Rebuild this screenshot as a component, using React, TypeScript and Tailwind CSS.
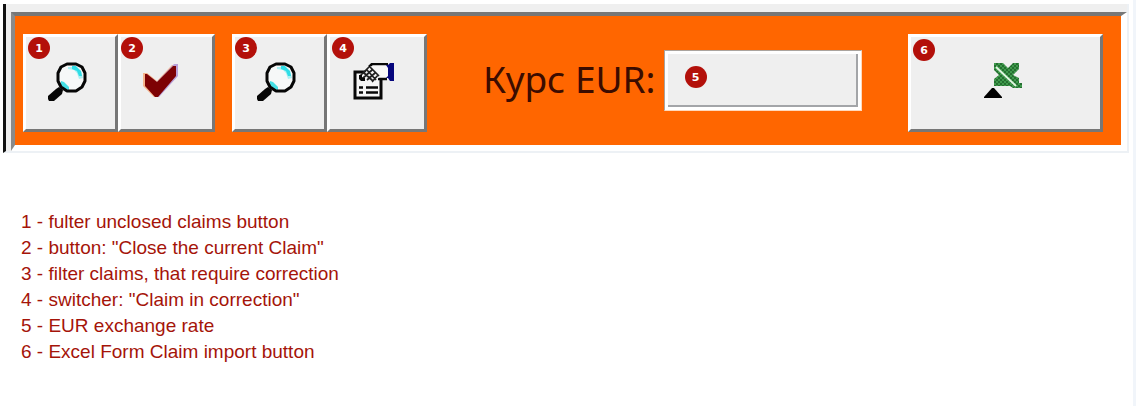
import type { ReactNode } from 'react';

function MagnifierIcon() {
  return (
    <svg viewBox="0 0 39 39" className="size-[39px]" aria-hidden="true">
      <path d="M19 2h10l5 3 3 5v10l-3 5-5 4H19l-5-4-3-5V10l3-5z" fill="#f6f8f8" />
      <path d="M20 5h8l5 4 2 7-4 1-2-6-3-3-6-1z" fill="#a9eff2" />
      <path d="M24 4h4l5 5 1 5h-3l-2-5-5-2z" fill="#2fdde6" />
      <path d="M13 19l3 1 5 5v3l-5-1-3-4z" fill="#45dfe5" />
      <path
        d="M19 2h9l6 3 3 6v8l-3 6-6 4h-9l-6-4-3-6v-8l3-6z"
        fill="none"
        stroke="#060606"
        strokeWidth="3"
        strokeLinejoin="bevel"
      />
      <path d="M11 25l4 3-1 4-8 7H1l-1-2v-3l8-7z" fill="#060606" />
    </svg>
  );
}

function PropertiesIcon() {
  return (
    <svg viewBox="0 0 42 37" className="h-[37px] w-[42px]" aria-hidden="true">
      <path d="M2 9h26v26H2z" fill="#f5f5f5" stroke="#080808" strokeWidth="3" />
      <path d="M18 2h17v14H23z" fill="#f8f8f8" />
      <path d="M16 4l3-3h16M25 16h9" fill="none" stroke="#080808" strokeWidth="2.6" />
      <path d="M33 2h2l2-2h4v18h-4l-2-3h-2l2-2V5z" fill="#06067c" />
      <path d="M18 3l10 9-6 7-5-4-6 4-4-2-1-5h4z" fill="#f2f2f2" />
      <path
        d="M17 4l9 9M14 7l9 10M11 10l9 8M7 13l3 4M19 7L9 16M22 10l-8 7M25 12l-6 7M16 4L7 13"
        stroke="#202020"
        strokeWidth="1.7"
        fill="none"
      />
      <path d="M6 12h3v3h3v3H8l-2-2z" fill="#080808" />
      <path d="M6 24.5h4M13 24.5h12M6 29.5h4M13 29.5h12" stroke="#080808" strokeWidth="2.4" />
    </svg>
  );
}

function CheckIcon() {
  return (
    <svg viewBox="0 0 36 34" className="h-[34px] w-9" aria-hidden="true">
      <path d="M0 9h4l10 8L29 1h3v10L15 33h-4L0 22z" fill="#f5b48c" />
      <path d="M3 10l11 8L31 0h4v12L16 33h-3z" fill="#b9a0d8" />
      <path d="M2 10h2l10 8L30 2h3v10L15 33h-3L2 22z" fill="#7d0204" />
    </svg>
  );
}

function ExcelIcon() {
  return (
    <svg viewBox="0 0 38 36" className="h-9 w-[38px]" aria-hidden="true">
      <defs>
        <pattern id="weave" width="4" height="4" patternUnits="userSpaceOnUse">
          <rect width="4" height="4" fill="#3f9a4c" />
          <rect width="2" height="2" fill="#256f31" />
          <rect x="2" y="2" width="2" height="2" fill="#256f31" />
        </pattern>
      </defs>
      <path d="M10 0h9l5 5 5-5h6v6l-6 6 6 3v5h3v5h-9l-3-2H10v-7l5-4-5-5z" fill="url(#weave)" />
      <path d="M12 4l20 19" stroke="#e2f7e2" strokeWidth="1.8" fill="none" />
      <path d="M0 35v-1l8-9h2l8 9v1z" fill="#000" />
    </svg>
  );
}

function Badge({ n, className }: { n: number; className: string }) {
  return (
    <span
      className={`absolute flex size-[22px] items-center justify-center rounded-full bg-[#b3100a] font-['DejaVu_Sans',sans-serif] text-[11px] leading-none font-bold text-white ${className}`}
    >
      {n}
    </span>
  );
}

function ToolButton({ label, className, children }: { label: string; className: string; children: ReactNode }) {
  return (
    <button
      type="button"
      aria-label={label}
      className={`relative flex h-[98px] shrink-0 items-center justify-center border-3 border-t-white border-r-[#777777] border-b-[#777777] border-l-white bg-[#efefef] pb-1 ${className}`}
    >
      {children}
    </button>
  );
}

const LEGEND = [
  '1 - fulter unclosed claims button',
  '2 - button: "Close the current Claim"',
  '3 - filter claims, that require correction',
  '4 - switcher: "Claim in correction"',
  '5 - EUR exchange rate',
  '6 - Excel Form Claim import button',
];

export default function App() {
  return (
    <main className="min-h-screen border-r-3 border-[#f1f5fa] bg-white pt-1 pr-1 pl-[3px] font-['Liberation_Sans',sans-serif]">
      <div className="border-r-2 border-b-2 border-l-3 border-r-[#edf1f5] border-b-[#edf1f5] border-l-[#111111] bg-[#efefef] pt-2 pl-[5px]">
        <div className="flex items-start border-t-4 border-r-6 border-b-6 border-l-4 border-t-[#777777] border-r-white border-b-white border-l-[#8a8a8a] bg-[#ff6600] pt-[18px] pr-[18px] pb-[13px] pl-2">
          <ToolButton label="Filter unclosed claims" className="w-[95px] pr-1.5">
            <Badge n={1} className="top-0 left-0.5" />
            <MagnifierIcon />
          </ToolButton>
          <ToolButton label="Close the current claim" className="w-[97px] pr-3">
            <Badge n={2} className="top-0 left-0" />
            <CheckIcon />
          </ToolButton>
          <ToolButton label="Filter claims that require correction" className="ml-[17px] w-[95px] pr-1.5">
            <Badge n={3} className="top-0 left-0" />
            <MagnifierIcon />
          </ToolButton>
          <ToolButton label="Claim in correction" className="w-[100px] pr-1.5">
            <Badge n={4} className="top-0 left-0.5" />
            <PropertiesIcon />
          </ToolButton>
          <label
            htmlFor="rate"
            className="ml-14 pt-5 font-['Noto_Sans',sans-serif] text-[37px] leading-[50px] whitespace-nowrap text-[#3b0c00]"
          >
            Курс EUR:
          </label>
          <div className="relative mt-4 ml-2 border border-t-[#aaa49e] border-r-[#ffd9bd] border-b-[#ffd9bd] border-l-[#aaa49e] bg-white p-[3px]">
            <input
              id="rate"
              type="text"
              className="block h-[53px] w-[190px] border-r-2 border-b-2 border-[#a3a5a8] bg-[#efefef] pl-12 text-2xl outline-none"
            />
            <Badge n={5} className="top-[15px] left-5" />
          </div>
          <ToolButton label="Import Excel claim form" className="ml-auto w-[195px] pr-1.5">
            <Badge n={6} className="top-0.5 left-0.5" />
            <ExcelIcon />
          </ToolButton>
        </div>
      </div>
      <ul className="px-[18px] pt-14 text-[19px] leading-[26px] text-[#a51409]">
        {LEGEND.map((line) => (
          <li key={line}>{line}</li>
        ))}
      </ul>
    </main>
  );
}
